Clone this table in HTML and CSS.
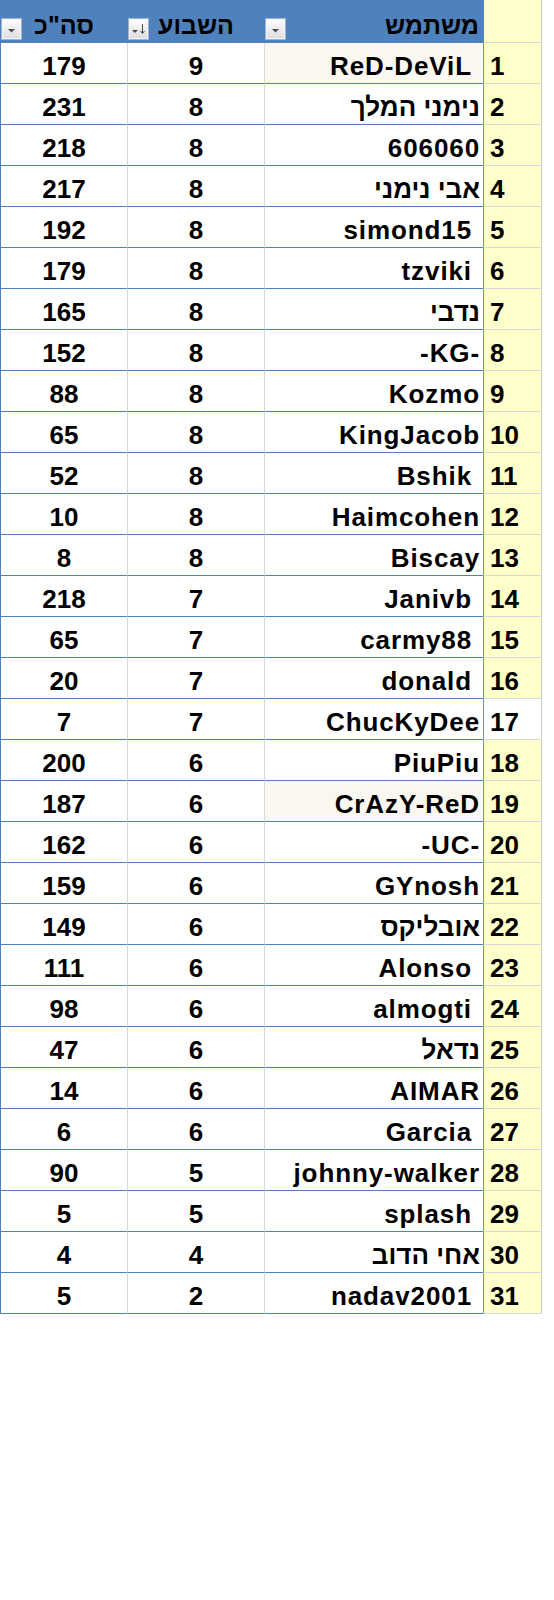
FILE: index.html
```html
<!DOCTYPE html>
<html lang="he">
<head>
<meta charset="utf-8">
<title>טבלת משתמשים</title>
<link rel="stylesheet" href="styles.css">
</head>
<body>
<table class="sheet" dir="rtl">
  <thead>
    <tr>
      <th class="rank-h"></th>
      <th class="name-h">משתמש<span class="dd"><svg width="19" height="20" viewBox="0 0 19 20"><path d="M6 10h7l-3.5 3.5z" fill="#4a4a4a"/></svg></span></th>
      <th class="week-h">השבוע<span class="dd"><svg width="19" height="20" viewBox="0 0 19 20"><path d="M3 11h6l-3 3z" fill="#4a4a4a"/><path d="M13.5 5v9" stroke="#4a4a4a" stroke-width="1"/><path d="M11.5 12l2 2.5 2-2.5" stroke="#4a4a4a" stroke-width="1" fill="none"/></svg></span></th>
      <th class="total-h">סה"כ<span class="dd"><svg width="19" height="20" viewBox="0 0 19 20"><path d="M6 10h7l-3.5 3.5z" fill="#4a4a4a"/></svg></span></th>
    </tr>
  </thead>
  <tbody>
    <tr><td class="rank">1</td><td class="name beige sp">ReD-DeViL</td><td class="num">9</td><td class="num tot">179</td></tr>
    <tr><td class="rank">2</td><td class="name he">נימני המלך</td><td class="num">8</td><td class="num tot">231</td></tr>
    <tr><td class="rank">3</td><td class="name">606060</td><td class="num">8</td><td class="num tot">218</td></tr>
    <tr><td class="rank">4</td><td class="name he">אבי נימני</td><td class="num">8</td><td class="num tot">217</td></tr>
    <tr><td class="rank">5</td><td class="name sp">simond15</td><td class="num">8</td><td class="num tot">192</td></tr>
    <tr><td class="rank">6</td><td class="name sp">tzviki</td><td class="num">8</td><td class="num tot">179</td></tr>
    <tr><td class="rank">7</td><td class="name he">נדבי</td><td class="num">8</td><td class="num tot">165</td></tr>
    <tr><td class="rank">8</td><td class="name">-KG-</td><td class="num">8</td><td class="num tot">152</td></tr>
    <tr><td class="rank">9</td><td class="name">Kozmo</td><td class="num">8</td><td class="num tot">88</td></tr>
    <tr><td class="rank">10</td><td class="name">KingJacob</td><td class="num">8</td><td class="num tot">65</td></tr>
    <tr><td class="rank">11</td><td class="name sp">Bshik</td><td class="num">8</td><td class="num tot">52</td></tr>
    <tr><td class="rank">12</td><td class="name">Haimcohen</td><td class="num">8</td><td class="num tot">10</td></tr>
    <tr><td class="rank">13</td><td class="name">Biscay</td><td class="num">8</td><td class="num tot">8</td></tr>
    <tr><td class="rank">14</td><td class="name sp">Janivb</td><td class="num">7</td><td class="num tot">218</td></tr>
    <tr><td class="rank">15</td><td class="name sp">carmy88</td><td class="num">7</td><td class="num tot">65</td></tr>
    <tr><td class="rank">16</td><td class="name sp">donald</td><td class="num">7</td><td class="num tot">20</td></tr>
    <tr><td class="rank white">17</td><td class="name">ChucKyDee</td><td class="num">7</td><td class="num tot">7</td></tr>
    <tr><td class="rank">18</td><td class="name">PiuPiu</td><td class="num">6</td><td class="num tot">200</td></tr>
    <tr><td class="rank">19</td><td class="name beige">CrAzY-ReD</td><td class="num">6</td><td class="num tot">187</td></tr>
    <tr><td class="rank">20</td><td class="name">-UC-</td><td class="num">6</td><td class="num tot">162</td></tr>
    <tr><td class="rank">21</td><td class="name">GYnosh</td><td class="num">6</td><td class="num tot">159</td></tr>
    <tr><td class="rank">22</td><td class="name he">אובליקס</td><td class="num">6</td><td class="num tot">149</td></tr>
    <tr><td class="rank">23</td><td class="name sp">Alonso</td><td class="num">6</td><td class="num tot">111</td></tr>
    <tr><td class="rank">24</td><td class="name sp">almogti</td><td class="num">6</td><td class="num tot">98</td></tr>
    <tr><td class="rank">25</td><td class="name he">נדאל</td><td class="num">6</td><td class="num tot">47</td></tr>
    <tr><td class="rank">26</td><td class="name">AIMAR</td><td class="num">6</td><td class="num tot">14</td></tr>
    <tr><td class="rank">27</td><td class="name sp">Garcia</td><td class="num">6</td><td class="num tot">6</td></tr>
    <tr><td class="rank">28</td><td class="name">johnny-walker</td><td class="num">5</td><td class="num tot">90</td></tr>
    <tr><td class="rank">29</td><td class="name sp">splash</td><td class="num">5</td><td class="num tot">5</td></tr>
    <tr><td class="rank">30</td><td class="name he">אחי הדוב</td><td class="num">4</td><td class="num tot">4</td></tr>
    <tr><td class="rank">31</td><td class="name sp">nadav2001</td><td class="num">2</td><td class="num tot">5</td></tr>
  </tbody>
</table>
</body>
</html>
```

FILE: styles.css
```css
html, body {
  margin: 0;
  padding: 0;
  background: #ffffff;
}

body {
  width: 554px;
  min-height: 1600px;
}

.sheet {
  border-collapse: separate;
  border-spacing: 0;
  table-layout: fixed;
  width: 542px;
  font-family: "Liberation Sans", Arial, "DejaVu Sans", sans-serif;
  font-weight: bold;
  font-size: 26px;
  color: #000;
}

.sheet th,
.sheet td {
  box-sizing: border-box;
  padding: 0;
  white-space: nowrap;
  overflow: hidden;
}

/* header */
.sheet th {
  height: 42px;
  padding-top: 9px;
  line-height: 33px;
  font-size: 25px;
  background: #4f81bd;
  border-bottom: 1px solid #4f81bd;
  border-left: 1px solid #4f81bd;
  font-weight: bold;
  position: relative;
  vertical-align: top;
}

.sheet th.rank-h {
  width: 59px;
  background: #ffffcc;
  border-bottom-color: #d5d8dc;
  border-right: 1px solid #c8c8c8;
}

.sheet th.name-h {
  width: 219px;
  text-align: right;
  padding-right: 4px;
}

.sheet th.week-h {
  width: 137px;
  text-align: center;
}

.sheet th.total-h {
  width: 127px;
  text-align: center;
}

.dd {
  position: absolute;
  left: 1px;
  top: 19px;
  width: 19px;
  height: 20px;
  box-sizing: border-box;
  border: 1px solid #f4f4f4;
  background: linear-gradient(#fdfdfd, #dedede);
  box-shadow: 0 0 0 1px #9eb3cf;
  line-height: 0;
}

.dd svg {
  position: absolute;
  left: -1px;
  top: -1px;
}

/* body cells */
.sheet td {
  height: 41px;
  padding-top: 6px;
  line-height: 34px;
  vertical-align: top;
  border-bottom: 1px solid #4f81bd;
  border-left: 1px solid #d9d9d9;
  background: #ffffff;
}

.sheet td.rank {
  background: #ffffcc;
  border-bottom-color: #d5d8dc;
  border-left-color: #6f8fc0;
  border-right: 1px solid #c8c8c8;
  text-align: left;
  padding-left: 6px;
}

.sheet td.rank.white {
  background: #ffffff;
}

.sheet td.name {
  text-align: right;
  padding-right: 3px;
  letter-spacing: 0.9px;
}

.sheet td.name.he {
  letter-spacing: 0;
}

.sheet td.name.sp {
  padding-right: 11px;
}

.sheet td.beige {
  background: #faf7f0;
}

.sheet td.num {
  text-align: center;
}

.sheet td.tot {
  border-left-color: #4f81bd;
}
```
